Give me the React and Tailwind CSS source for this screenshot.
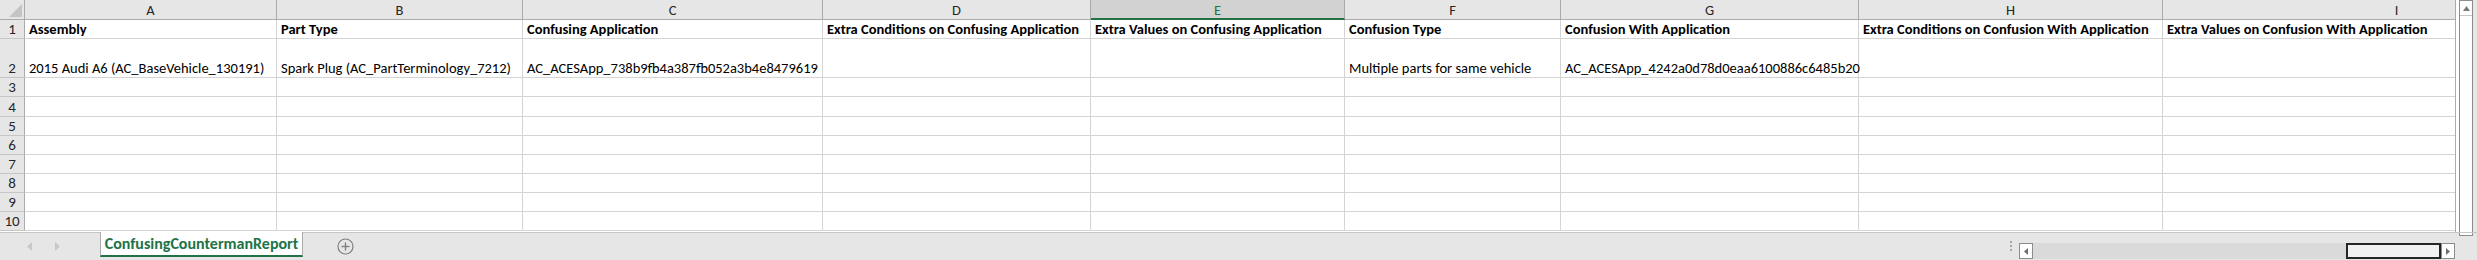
import React from "react";

const cols = [
  { w: "w-[252px]", l: "A", h: "Assembly", v: "2015 Audi A6 (AC_BaseVehicle_130191)" },
  { w: "w-[246px]", l: "B", h: "Part Type", v: "Spark Plug (AC_PartTerminology_7212)" },
  { w: "w-[300px]", l: "C", h: "Confusing Application", v: "AC_ACESApp_738b9fb4a387fb052a3b4e8479619" },
  { w: "w-[268px]", l: "D", h: "Extra Conditions on Confusing Application", v: "" },
  { w: "w-[254px]", l: "E", h: "Extra Values on Confusing Application", v: "", sel: true },
  { w: "w-[216px]", l: "F", h: "Confusion Type", v: "Multiple parts for same vehicle" },
  { w: "w-[298px]", l: "G", h: "Confusion With Application", v: "AC_ACESApp_4242a0d78d0eaa6100886c6485b20" },
  { w: "w-[304px]", l: "H", h: "Extra Conditions on Confusion With Application", v: "" },
  { w: "w-[468px]", l: "I", h: "Extra Values on Confusion With Application", v: "" },
];

const rowH = [
  "h-[19px]",
  "h-[39px]",
  "h-[19px]",
  "h-[20px]",
  "h-[19px]",
  "h-[19px]",
  "h-[19px]",
  "h-[19px]",
  "h-[19px]",
  "h-[19px]",
];

const font = { fontFamily: "Carlito, Calibri, Lato, 'Open Sans', sans-serif" };

function HeaderRow() {
  return (
    <div className="flex h-[20px] shrink-0">
      <div className="w-[25px] shrink-0 bg-[#e6e6e6] border-r border-b border-[#ababab] relative">
        <svg className="absolute left-[9px] top-[4px]" width="13" height="13" viewBox="0 0 13 13">
          <polygon points="13,0 13,13 0,13" fill="#c4c4c4" />
        </svg>
      </div>
      {cols.map((c) =>
        c.sel ? (
          <div
            key={c.l}
            className={`${c.w} shrink-0 bg-[#d2d2d2] border-r border-[#ababab] border-b-2 border-b-[#217346] flex items-center justify-center text-[14.5px] leading-[16px] pt-[1px] text-[#217346]`}
          >
            {c.l}
          </div>
        ) : (
          <div
            key={c.l}
            className={`${c.w} shrink-0 bg-[#e6e6e6] border-r border-b border-[#ababab] flex items-center justify-center text-[14.5px] leading-[16px] text-[#262626]`}
          >
            {c.l}
          </div>
        )
      )}
    </div>
  );
}

function DataRow({ idx }) {
  const h = rowH[idx];
  const n = idx + 1;
  return (
    <div className={`flex ${h} shrink-0`}>
      <div className="w-[25px] shrink-0 bg-[#e6e6e6] border-r border-[#ababab] border-b border-b-[#c6c6c6] flex items-end justify-center pb-[1px] text-[15px] leading-[16px] text-[#262626]">
        {n}
      </div>
      {cols.map((c) => {
        let text = "";
        let bold = false;
        if (n === 1) {
          text = c.h;
          bold = true;
        } else if (n === 2) {
          text = c.v;
        }
        return (
          <div
            key={c.l}
            className={`${c.w} shrink-0 border-r border-b border-[#d4d4d4] flex items-end pl-[4px] pb-[1px] whitespace-nowrap text-[14.5px] leading-[16px] text-black ${bold ? "font-bold" : "font-normal"}`}
          >
            {text}
          </div>
        );
      })}
    </div>
  );
}

export default function App() {
  return (
    <div className="w-[2477px] h-[260px] bg-[#e6e6e6] flex flex-col overflow-hidden" style={font}>
      <div className="flex h-[232px] shrink-0">
        <div className="w-[2456px] shrink-0 h-[232px] bg-white overflow-hidden flex flex-col border-r border-[#ababab]">
          <HeaderRow />
          {rowH.map((_, i) => (
            <DataRow key={i} idx={i} />
          ))}
        </div>
        <div className="w-[3px] shrink-0 bg-white" />
        <div className="w-[14px] h-[236px] shrink-0 bg-white border border-[#8c8c8c] flex flex-col">
          <div className="h-[15px] border-b border-[#c6c6c6] flex items-center justify-center">
            <svg width="7" height="5" viewBox="0 0 7 5">
              <polygon points="3.5,0 7,5 0,5" fill="#7a7a7a" />
            </svg>
          </div>
        </div>
        <div className="flex-1 bg-[#e6e6e6]" />
      </div>
      <div className="flex h-[28px] shrink-0 border-t border-[#c6c6c6] relative">
        <div className="w-[100px] shrink-0 flex items-center pl-[27px] gap-[23px] pb-[1px]">
          <svg width="5" height="9" viewBox="0 0 5 9">
            <polygon points="5,0 5,9 0,4.5" fill="#c8c8c8" />
          </svg>
          <svg width="5" height="9" viewBox="0 0 5 9">
            <polygon points="0,0 0,9 5,4.5" fill="#c8c8c8" />
          </svg>
        </div>
        <div className="w-[203px] h-[25px] shrink-0 bg-white border-l border-r border-[#ababab] border-b-[2px] border-b-[#217346] -mt-[1px] flex items-center justify-center text-[16px] leading-[20px] font-bold text-[#217346]">
          ConfusingCountermanReport
        </div>
        <div className="w-[84px] shrink-0 flex items-center justify-center pb-[1px]">
          <svg width="17" height="17" viewBox="0 0 17 17">
            <circle cx="8.5" cy="8.5" r="7.5" fill="none" stroke="#7f7f7f" strokeWidth="1.2" />
            <line x1="8.5" y1="4.5" x2="8.5" y2="12.5" stroke="#7f7f7f" strokeWidth="1.4" />
            <line x1="4.5" y1="8.5" x2="12.5" y2="8.5" stroke="#7f7f7f" strokeWidth="1.4" />
          </svg>
        </div>
        <div className="flex-1" />
        <div className="w-[16px] shrink-0 flex flex-col items-center justify-center gap-[2px] pb-[1px]">
          <div className="w-[2px] h-[2px] bg-[#a6a6a6]" />
          <div className="w-[2px] h-[2px] bg-[#a6a6a6]" />
          <div className="w-[2px] h-[2px] bg-[#a6a6a6]" />
        </div>
        <div className="w-[436px] shrink-0 h-[16px] mt-[10px] flex">
          <div className="w-[14px] h-[16px] shrink-0 bg-white border border-[#8c8c8c] flex items-center justify-center">
            <svg width="4" height="7" viewBox="0 0 4 7">
              <polygon points="4,0 4,7 0,3.5" fill="#6e6e6e" />
            </svg>
          </div>
          <div className="flex-1 bg-[#dadada] flex justify-end">
            <div className="w-[95px] h-[16px] bg-[#f1f1f1] border-2 border-[#262626]" />
          </div>
          <div className="w-[14px] h-[16px] shrink-0 bg-white border border-[#8c8c8c] flex items-center justify-center">
            <svg width="4" height="7" viewBox="0 0 4 7">
              <polygon points="0,0 0,7 4,3.5" fill="#6e6e6e" />
            </svg>
          </div>
        </div>
        <div className="w-[22px] shrink-0" />
      </div>
    </div>
  );
}
